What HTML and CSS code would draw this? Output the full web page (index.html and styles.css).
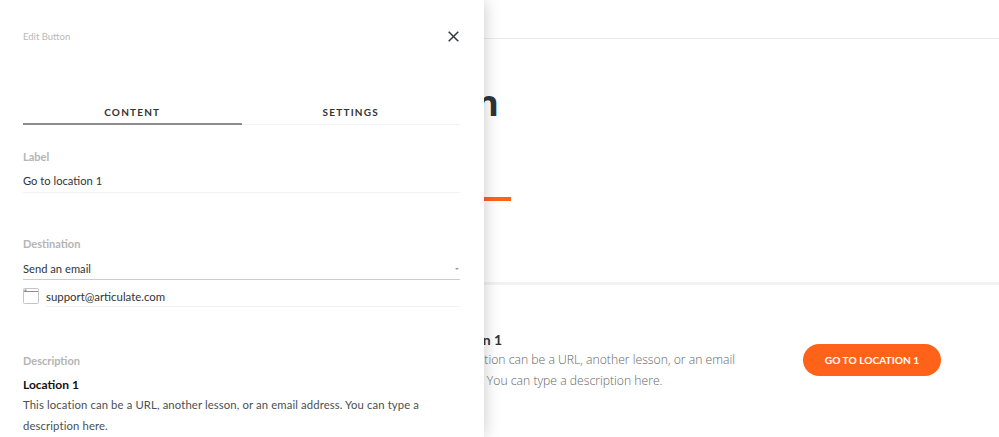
FILE: index.html
```html
<!DOCTYPE html>
<html lang="en">
<head>
  <meta charset="UTF-8" />
  <title>Edit Button</title>
  <link rel="stylesheet" href="styles.css">
</head>
<body>
  <div class="page">
    <div class="topbar"></div>
    <section class="hero">
      <h1>Plan</h1>
      <div class="accent"></div>
    </section>
    <section class="block">
      <div class="block-text">
        <h3>Location 1</h3>
        <p>This location can be a URL, another lesson, or an email address. You can type a description here.</p>
      </div>
      <a class="cta">GO TO LOCATION 1</a>
    </section>
  </div>

  <aside class="panel">
    <div class="panel-head">
      <span class="panel-title">Edit Button</span>
      <svg class="close" width="11" height="11" viewBox="0 0 11 11"><path d="M.7.7l9.6 9.6M10.3.7L.7 10.3" stroke="#333a3e" stroke-width="1.5" fill="none"/></svg>
    </div>

    <div class="tabs">
      <div class="tab active">CONTENT</div>
      <div class="tab">SETTINGS</div>
    </div>

    <div class="field-label first">Label</div>
    <div class="value underline">Go to location 1</div>

    <div class="field-label dest">Destination</div>
    <div class="value select">
      <span>Send an email</span>
      <i class="caret"></i>
    </div>
    <div class="url-row">
      <svg class="url-icon" width="16" height="16" viewBox="0 0 16 16"><rect x=".5" y=".5" width="15" height="15" rx="1" fill="#fff" stroke="#c4c4c4"/><path d="M1 3.5h14" stroke="#8f8f8f"/><rect x="1.5" y="1.5" width="2" height="1.4" fill="#8a8a8a"/></svg>
      <div class="value url">support@articulate.com</div>
    </div>

    <div class="field-label desc">Description</div>
    <div class="desc-title">Location 1</div>
    <p class="desc-body">This location can be a URL, another lesson, or an email address. You can type a description here.</p>
  </aside>
</body>
</html>
```

FILE: styles.css
```css
html, body {
  margin: 0;
  padding: 0;
  height: 437px;
  overflow: hidden;
  background: #fff;
}
body {
  font-family: "Lato", sans-serif;
  color: #313537;
}

/* page behind the drawer */
.topbar {
  height: 38px;
  border-bottom: 1px solid #ececec;
}
.hero {
  height: 243px;
  border-bottom: 3px solid #f2f2f2;
  padding-left: 420px;
}
.hero h1 {
  margin: 0;
  padding-top: 42px;
  font-family: "Open Sans", sans-serif;
  font-size: 36px;
  line-height: 44px;
  font-weight: 700;
  color: #2e3538;
}
.accent {
  width: 91px;
  height: 4px;
  margin-top: 72px;
  background: #ff6319;
}
.block {
  display: flex;
  align-items: flex-start;
  padding: 45px 58px 0 437px;
}
.block-text {
  width: 305px;
}
.block-text h3 {
  margin: 0;
  font-size: 14px;
  line-height: 20px;
  font-weight: 700;
  color: #313537;
}
.block-text p {
  margin: 0;
  font-family: "Open Sans", sans-serif;
  font-weight: 300;
  font-size: 12.2px;
  line-height: 20.5px;
  color: #666;
}
.cta {
  margin: 14px 0 0 auto;
  width: 138px;
  height: 32px;
  line-height: 32px;
  border-radius: 16px;
  background: #ff6319;
  color: #fff;
  font-size: 10.2px;
  font-weight: 700;
  text-align: center;
}

/* edit drawer */
.panel {
  position: absolute;
  top: 0;
  left: 0;
  width: 484px;
  height: 437px;
  box-sizing: border-box;
  padding: 0 24px 0 23px;
  background: #fff;
  box-shadow: 0 0 16px rgba(0,0,0,0.22);
  overflow: hidden;
}
.panel-head {
  display: flex;
  justify-content: space-between;
  align-items: center;
  height: 73px;
  padding-right: 1px;
}
.panel-title {
  font-size: 9.5px;
  color: #b9b9b9;
}
.tabs {
  display: flex;
  margin-top: 30px;
}
.tab {
  flex: 1;
  height: 21px;
  text-align: center;
  font-size: 10px;
  line-height: 18px;
  font-weight: 700;
  letter-spacing: 1.2px;
  border-bottom: 1px solid #f2f2f2;
  color: #333;
}
.tab.active {
  height: 20px;
  border-bottom: 2px solid #8c8c8c;
}
.field-label {
  font-size: 11px;
  line-height: 14px;
  font-weight: 700;
  color: #b4b4b4;
}
.field-label.first {
  margin-top: 25px;
}
.field-label.dest {
  margin-top: 44px;
}
.field-label.desc {
  margin-top: 47px;
}
.value {
  font-size: 11.2px;
  line-height: 18px;
  color: #313537;
}
.underline {
  margin-top: 8px;
  padding-bottom: 2px;
  border-bottom: 1px solid #f2f2f2;
}
.select {
  display: flex;
  justify-content: space-between;
  align-items: center;
  margin-top: 9px;
  padding-bottom: 1px;
  border-bottom: 1px solid #ccc;
}
.caret {
  width: 0;
  height: 0;
  margin-right: 1px;
  border: 2.5px solid transparent;
  border-top: 2.5px solid #999;
  border-bottom: 0;
}
.url-row {
  display: flex;
  align-items: flex-start;
  gap: 7px;
  margin-top: 8px;
}
.url {
  flex: 1;
  padding-bottom: 1px;
  border-bottom: 1px solid #f2f2f2;
  line-height: 17px;
  font-size: 11.4px;
}
.desc-title {
  margin-top: 8px;
  font-size: 12px;
  line-height: 18px;
  font-weight: 700;
  color: #111;
}
.desc-body {
  margin: 1px 0 0;
  width: 410px;
  font-size: 11.3px;
  line-height: 20.5px;
  letter-spacing: .12px;
  color: #4a4f52;
}
```
